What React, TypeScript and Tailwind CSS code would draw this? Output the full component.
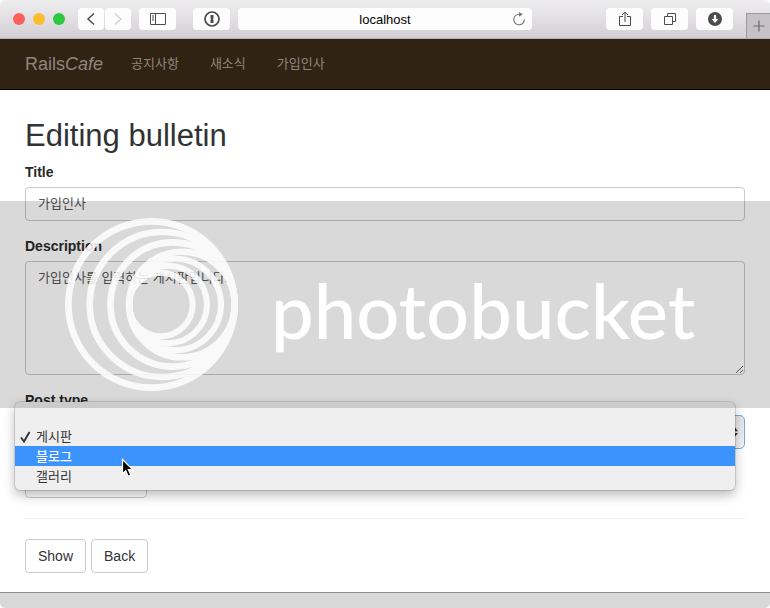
import type { ReactNode } from "react";

const latin = "font-['Liberation_Sans','Noto_Sans_CJK_KR',sans-serif]";

function ToolButton({ label, className, children }: { label: string; className: string; children: ReactNode }) {
  return (
    <button
      type="button"
      aria-label={label}
      className={`flex h-[22px] shrink-0 items-center justify-center rounded-[4px] bg-[#fdfdfd] text-[#4c4c4c] ${className}`}
    >
      {children}
    </button>
  );
}

function Toolbar() {
  return (
    <header className="flex h-[39px] shrink-0 items-center rounded-t-[5px] border-b border-[#b5b2b5] bg-linear-to-b from-[#efeeef] to-[#d3d0d4] pl-[13px]">
      <div className="flex gap-2">
        <span className="size-3 rounded-full bg-[#fc605c]" />
        <span className="size-3 rounded-full bg-[#fdbc30]" />
        <span className="size-3 rounded-full bg-[#2bc840]" />
      </div>
      <div className="ml-[13px] flex gap-px">
        <ToolButton label="Back" className="w-[26px]">
          <svg width="10" height="14" viewBox="0 0 10 14" fill="none" stroke="currentColor" strokeWidth="1.5">
            <path d="M8 1.5 2 7l6 5.500" />
          </svg>
        </ToolButton>
        <ToolButton label="Forward" className="w-[26px]">
          <svg width="10" height="14" viewBox="0 0 10 14" fill="none" stroke="#cfcfcf" strokeWidth="1.300">
            <path d="m2 1.500 6 5.500-6 5.500" />
          </svg>
        </ToolButton>
      </div>
      <ToolButton label="Sidebar" className="ml-2 w-[37px]">
        <svg width="16" height="14" viewBox="0 0 16 14" fill="none" stroke="currentColor" strokeWidth="1">
          <path d="M.5 1.500h15v11H.5zM5.500 1.500v11M2 4h2M2 6h2M2 8h2" />
        </svg>
      </ToolButton>
      <ToolButton label="Passwords" className="ml-[17px] w-[37px]">
        <svg width="16" height="16" viewBox="0 0 16 16" fill="none" stroke="currentColor">
          <circle cx="8" cy="8" r="7" strokeWidth="1.700" />
          <path d="M6.500 4h3v3.200l-.7.8.7.8V12h-3V8.800l.7-.8-.7-.8z" fill="currentColor" stroke="none" />
        </svg>
      </ToolButton>
      <div className="relative ml-2 min-w-0 flex-1">
        <input
          aria-label="Address"
          defaultValue="localhost"
          className="block h-[22px] w-full rounded-[4px] bg-[#fdfdfd] pt-px text-center text-[13px] text-black outline-none"
        />
        <button type="button" aria-label="Reload" className="absolute top-1 right-[6px] text-[#777]">
          <svg width="14" height="14" viewBox="0 0 14 14" fill="none" stroke="currentColor" strokeWidth="1.100">
            <path d="M12.300 7.200A5.300 5.300 0 1 1 7 2.200h1.500" />
            <path d="M7 0v4.800l3.800-2.500z" fill="currentColor" stroke="none" />
          </svg>
        </button>
      </div>
      <div className="ml-[74px] flex gap-2">
        <ToolButton label="Share" className="w-[37px]">
          <svg width="14" height="16" viewBox="0 0 14 16" fill="none" stroke="currentColor" strokeWidth="1">
            <path d="M5 5.500H1.500v9h11v-9H9M7 11V1.200M4.200 4 7 1.200 9.800 4" />
          </svg>
        </ToolButton>
        <ToolButton label="Tabs" className="w-[37px]">
          <svg width="14" height="14" viewBox="0 0 14 14" fill="none" stroke="currentColor" strokeWidth="1">
            <path d="M1.500 4.500h8v8h-8zM4.500 4.500v-3h8v8h-3" />
          </svg>
        </ToolButton>
        <ToolButton label="Downloads" className="w-[37px]">
          <svg width="14" height="14" viewBox="0 0 14 14">
            <circle cx="7" cy="7" r="7" fill="currentColor" />
            <path d="M5.900 3h2.200v4h2.200L7 11 3.700 7h2.200z" fill="white" />
          </svg>
        </ToolButton>
      </div>
      <button
        type="button"
        aria-label="New tab"
        className="ml-[13px] flex h-[25px] w-6 shrink-0 items-center justify-center self-end border-t border-l border-[#9b999b] bg-[#c5c2c6]"
      >
        <svg width="12" height="12" viewBox="0 0 12 12" stroke="#6e6c6e" strokeWidth="1.200">
          <path d="M6 .5v11M.5 6h11" />
        </svg>
      </button>
    </header>
  );
}

function Navbar() {
  const links = ["공지사항", "새소식", "가입인사"];
  return (
    <nav className="flex h-[51px] shrink-0 items-center border-b border-black bg-[#302314] px-[25px] text-[#8f857c]">
      <a href="#home" className="text-[18px] leading-5">
        Rails<em>Cafe</em>
      </a>
      <div className="ml-7 flex gap-[31px] text-[13px] leading-5">
        {links.map((l) => (
          <a key={l} href={`#${l}`}>
            {l}
          </a>
        ))}
      </div>
    </nav>
  );
}

function PostTypeMenu() {
  const row = "flex h-5 items-center pt-px text-[13px]";
  return (
    <div className="absolute -top-[13px] right-[10px] -left-[10px] rounded-[5px] bg-[#efefef] pt-6 pb-1 text-[#333] shadow-[0_0_0_1px_rgba(0,0,0,0.12),0_5px_12px_rgba(0,0,0,0.28)]">
      <ul role="listbox" aria-label="Post type">
        <li role="option" aria-selected="true" className={row}>
          <span className="flex w-[21px] pl-[5px]">
            <svg width="11" height="12" viewBox="0 0 11 12" fill="none" stroke="#333" strokeWidth="1.900">
              <path d="M1 6.500 4 10.500 9.500 1" />
            </svg>
          </span>
          게시판
        </li>
        <li role="option" aria-selected="false" className={`${row} bg-[#3d93fe] pl-[21px] font-medium text-white`}>
          블로그
        </li>
        <li role="option" aria-selected="false" className={`${row} pl-[21px]`}>
          갤러리
        </li>
      </ul>
      <svg className="absolute top-[56px] left-[106px]" width="15" height="21" viewBox="0 0 15 21">
        <path
          d="M1.500 1.500v14.200l3.300-3 2.300 5.500 2.600-1.100-2.300-5.400h4.400z"
          fill="black"
          stroke="white"
          strokeWidth="1.200"
        />
      </svg>
    </div>
  );
}

const outerRings = [
  { cx: 304, r: 249 },
  { cx: 336, r: 217 },
  { cx: 367, r: 186 },
  { cx: 395, r: 158 },
];

const innerRings = [
  { cx: 375, r: 137 },
  { cx: 354, r: 116 },
  { cx: 332, r: 95 },
];

function Watermark() {
  return (
    <div className="pointer-events-none absolute inset-x-0 top-[201px] flex h-[207px] items-center bg-black/15 pl-[65px] text-white">
      <svg className="shrink-0" width="173" height="173" viewBox="45 27 518 518" fill="none" stroke="white" opacity="0.85">
        {outerRings.map((c) => (
          <circle key={c.cx} cx={c.cx} cy="286" r={c.r} strokeWidth="20" />
        ))}
        {innerRings.map((c) => (
          <circle key={c.cx} cx={c.cx} cy="286" r={c.r} strokeWidth="18" />
        ))}
      </svg>
      <span className="ml-[33px] pt-[10px] font-[Lato,sans-serif] text-[76px] leading-[90px] font-medium">photobucket</span>
    </div>
  );
}

export default function App() {
  const label = "mb-[5px] block text-[14px] leading-5 font-bold text-[#282828]";
  const field = "block w-full rounded-[4px] border border-[#c8c8c8] bg-white px-3 text-[13px] text-[#555] outline-none";
  const button = "h-[34px] rounded-[4px] border border-[#ccc] bg-white px-3 text-[14px] text-[#333]";
  return (
    <div className={`relative flex min-h-screen flex-col bg-white ${latin}`}>
      <Toolbar />
      <Navbar />
      <main className="px-[25px] pt-[29px] pb-[19px]">
        <h1 className="mb-[9px] text-[31px] leading-[34px] font-medium text-[#303233]">Editing bulletin</h1>
        <form>
          <label htmlFor="title" className={label}>
            Title
          </label>
          <input id="title" defaultValue="가입인사" className={`${field} mb-[15px] h-[34px] pb-[3px]`} />
          <label htmlFor="description" className={label}>
            Description
          </label>
          <textarea
            id="description"
            defaultValue="가입인사를 입력하는 게시판입니다."
            className={`${field} mb-[15px] h-[114px] resize-y py-[6px] leading-5`}
          />
          <label htmlFor="post-type" className={label}>
            Post type
          </label>
          <div className="relative mb-[15px]">
            <select
              id="post-type"
              className="block h-[34px] w-full appearance-none rounded-[5px] border border-[#6aaeea] bg-linear-to-b from-[#e4e4e4] to-[#f3f3f3] px-3 text-[13px] text-[#555]"
            >
              <option>게시판</option>
              <option>블로그</option>
              <option>갤러리</option>
            </select>
            <svg className="absolute top-[11px] right-[7px]" width="7" height="12" viewBox="0 0 8 12" fill="#333">
              <path d="M4 0l4 5H0zM4 12l4-5H0z" />
            </svg>
            <PostTypeMenu />
          </div>
          <button type="submit" aria-label="Save" className={`${button} block w-[122px]`} />
        </form>
        <hr className="my-5 border-[#eee]" />
        <div className="flex gap-[5px]">
          <button type="button" className={button}>
            Show
          </button>
          <button type="button" className={button}>
            Back
          </button>
        </div>
      </main>
      <footer className="flex-1 rounded-b-[5px] border-t border-[#8e8e8e] bg-[#d8d8d8]" />
      <Watermark />
    </div>
  );
}
